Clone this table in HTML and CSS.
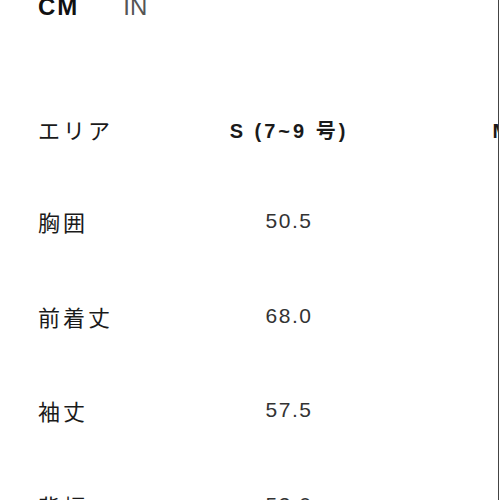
FILE: index.html
```html
<!DOCTYPE html>
<html lang="ja">
<head>
<meta charset="utf-8">
<link rel="stylesheet" href="styles.css">
</head>
<body>
<div class="page">
  <div class="units">
    <span class="unit active">CM</span>
    <span class="unit">IN</span>
  </div>
  <div class="table">
    <div class="cell label head">エリア</div>
    <div class="cell size head">S (7~9 号)</div>
    <div class="cell size head">M (11~13 号)</div>

    <div class="cell label">胸囲</div>
    <div class="cell value">50.5</div>
    <div class="cell value">53.0</div>

    <div class="cell label">前着丈</div>
    <div class="cell value">68.0</div>
    <div class="cell value">69.5</div>

    <div class="cell label">袖丈</div>
    <div class="cell value">57.5</div>
    <div class="cell value">58.5</div>

    <div class="cell label">背幅</div>
    <div class="cell value">53.0</div>
    <div class="cell value">55.0</div>
  </div>
</div>
</body>
</html>
```

FILE: styles.css
```css
html, body {
  margin: 0;
  padding: 0;
  background: #fff;
}
body {
  font-family: "Liberation Sans", "Noto Sans CJK JP", sans-serif;
  color: #222;
}
.page {
  width: 499px;
  height: 500px;
  border-right: 1px solid #444;
  overflow: hidden;
  padding-left: 38px;
  box-sizing: border-box;
}
.units {
  display: flex;
  gap: 44px;
  margin-top: -5px;
  font-size: 24px;
  line-height: 24px;
}
.unit {
  color: #555;
  font-weight: 400;
}
.unit.active {
  color: #111;
  font-weight: 700;
  letter-spacing: 2px;
}
.table {
  display: grid;
  grid-template-columns: 115px 272px 284px;
  grid-template-rows: 90px repeat(4, 94.5px);
  margin-top: 65px;
}
.cell {
  display: flex;
  align-items: center;
  white-space: nowrap;
}
.label {
  font-family: "Noto Sans CJK JP", sans-serif;
  font-size: 22px;
  letter-spacing: 3px;
  color: #1a1a1a;
}
.head.size {
  justify-content: center;
  font-weight: 700;
  font-size: 20px;
  letter-spacing: 3px;
  color: #1a1a1a;
}
.value {
  justify-content: center;
  font-size: 21px;
  letter-spacing: 1.5px;
  color: #333;
}
```
